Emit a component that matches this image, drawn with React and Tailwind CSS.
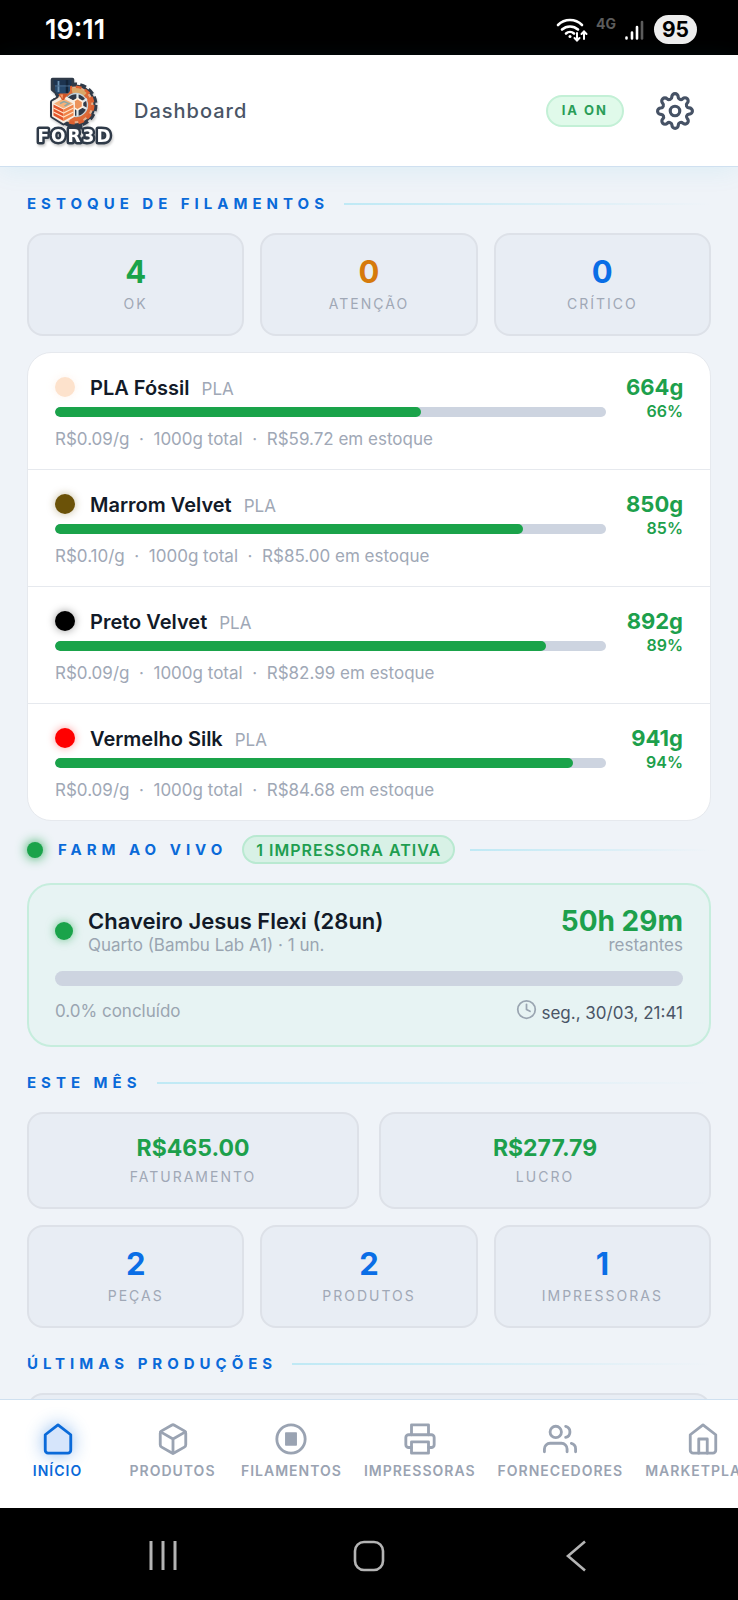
import React from 'react';

const filaments = [
    { name: 'PLA Fóssil', material: 'PLA', color: '#fde2cc', price: '0.09', total: 1000, left: 664, value: '59.72' },
    { name: 'Marrom Velvet', material: 'PLA', color: '#6b5208', price: '0.10', total: 1000, left: 850, value: '85.00' },
    { name: 'Preto Velvet', material: 'PLA', color: '#000000', price: '0.09', total: 1000, left: 892, value: '82.99' },
    { name: 'Vermelho Silk', material: 'PLA', color: '#ff0000', price: '0.09', total: 1000, left: 941, value: '84.68' },
];

const navItems = [
    { label: 'INÍCIO', icon: 'home', active: true },
    { label: 'PRODUTOS', icon: 'box' },
    { label: 'FILAMENTOS', icon: 'spool' },
    { label: 'IMPRESSORAS', icon: 'printer' },
    { label: 'FORNECEDORES', icon: 'users' },
    { label: 'MARKETPLACE', icon: 'store' },
];

const iconPaths = {
    home: <path d="M3 9l9-7 9 7v11a2 2 0 0 1-2 2H5a2 2 0 0 1-2-2z" fill="#d6e5fb" />,
    box: (
        <>
            <path d="M21 16V8a2 2 0 0 0-1-1.73l-7-4a2 2 0 0 0-2 0l-7 4A2 2 0 0 0 3 8v8a2 2 0 0 0 1 1.73l7 4a2 2 0 0 0 2 0l7-4A2 2 0 0 0 21 16z" />
            <path d="M3.27 6.96L12 12.01l8.73-5.05M12 22.08V12" />
        </>
    ),
    spool: (
        <>
            <circle cx="12" cy="12" r="10" />
            <rect x="7.8" y="7.300" width="8.400" height="9.400" rx="0.5" fill="currentColor" stroke="none" />
        </>
    ),
    printer: (
        <>
            <path d="M6 9V2h12v7" />
            <path d="M6 18H4a2 2 0 0 1-2-2v-5a2 2 0 0 1 2-2h16a2 2 0 0 1 2 2v5a2 2 0 0 1-2 2h-2" />
            <rect x="6" y="14" width="12" height="8" />
        </>
    ),
    users: (
        <>
            <path d="M17 21v-2a4 4 0 0 0-4-4H5a4 4 0 0 0-4 4v2" />
            <circle cx="9" cy="7" r="4" />
            <path d="M23 21v-2a4 4 0 0 0-3-3.87M16 3.13a4 4 0 0 1 0 7.75" />
        </>
    ),
    store: (
        <>
            <path d="M3 9l9-7 9 7v11a2 2 0 0 1-2 2H5a2 2 0 0 1-2-2z" />
            <path d="M9 22V12h6v10" />
        </>
    ),
    gear: (
        <>
            <circle cx="12" cy="12" r="3" />
            <path d="M19.4 15a1.65 1.65 0 0 0 .33 1.82l.06.06a2 2 0 0 1 0 2.83 2 2 0 0 1-2.83 0l-.06-.06a1.65 1.65 0 0 0-1.82-.33 1.65 1.65 0 0 0-1 1.51V21a2 2 0 0 1-2 2 2 2 0 0 1-2-2v-.09A1.65 1.65 0 0 0 9 19.4a1.65 1.65 0 0 0-1.82.33l-.06.06a2 2 0 0 1-2.83 0 2 2 0 0 1 0-2.83l.06-.06a1.65 1.65 0 0 0 .33-1.82 1.65 1.65 0 0 0-1.51-1H3a2 2 0 0 1-2-2 2 2 0 0 1 2-2h.09A1.65 1.65 0 0 0 4.6 9a1.65 1.65 0 0 0-.33-1.82l-.06-.06a2 2 0 0 1 0-2.83 2 2 0 0 1 2.83 0l.06.06a1.65 1.65 0 0 0 1.82.33H9a1.65 1.65 0 0 0 1-1.51V3a2 2 0 0 1 2-2 2 2 0 0 1 2 2v.09a1.65 1.65 0 0 0 1 1.51 1.65 1.65 0 0 0 1.82-.33l.06-.06a2 2 0 0 1 2.83 0 2 2 0 0 1 0 2.83l-.06.06a1.65 1.65 0 0 0-.33 1.82V9a1.65 1.65 0 0 0 1.51 1H21a2 2 0 0 1 2 2 2 2 0 0 1-2 2h-.09a1.65 1.65 0 0 0-1.51 1z" />
        </>
    ),
    clock: (
        <>
            <circle cx="12" cy="12" r="10" />
            <path d="M12 6v6l4 2" />
        </>
    ),
};

const Icon = ({ name, size, className }) => (
    <svg width={size} height={size} viewBox="0 0 24 24" fill="none" stroke="currentColor" strokeWidth="2"
        strokeLinecap="round" strokeLinejoin="round" overflow="visible" className={className} aria-hidden="true">
        {iconPaths[name]}
    </svg>
);

const Logo = () => (
    <svg width="80" height="72" viewBox="0 0 80 72" className="shrink-0 drop-shadow-[1px_2px_1px_rgb(0,0,0,0.2)]" role="img" aria-label="FOR3D">
        {/* Sticker outline */}
        <g fill="#2f3a48" stroke="#2f3a48" strokeLinejoin="round">
            <path d="M18.500 4.500h20v11l-4 8H25l-3-6-3.500-3z" strokeWidth="3.5" />
            <circle cx="41" cy="30" r="19.500" strokeWidth="2" />
            <circle cx="41" cy="30" r="20.500" fill="none" strokeDasharray="6 3.200" strokeWidth="4" />
            <path d="M29.500 21l11 6v14l-11 7-11-7V27z" strokeWidth="5" />
            <path d="M34 44h14v10H34z" strokeWidth="1" />
        </g>
        {/* Gear, light rim first and the teeth over it */}
        <circle cx="41" cy="30" r="18.500" fill="#e3b08c" />
        <circle cx="41" cy="30" r="17.500" fill="none" stroke="#dd6030" strokeWidth="4" strokeDasharray="5.500 3.700" />
        <circle cx="41" cy="30" r="14" fill="#2f3a48" stroke="#dd6a37" strokeWidth="4.500" />
        <path d="M38 15.800a14.500 14.500 0 0 1 13 4" fill="none" stroke="#dba867" strokeWidth="5" />
        <circle cx="42" cy="30" r="11.500" fill="none" stroke="#c3d3da" strokeWidth="1.300" />
        <path d="M43.500 19v22M34 24l19 10M34 36l19-12" stroke="#dfe8eb" strokeWidth="2.200" />
        <path d="M43.500 23.500l5 3v5.500l-5 3-5-3v-5.500z" fill="#ec935a" stroke="#fff0de" strokeWidth="1.500" />
        {/* Printed cube */}
        <path d="M29.500 20l11.500 6.500v15l-11.500 7-11.500-7v-15z" fill="#f7ede2" />
        <path d="M29.500 23.500l9.500 5-9.500 5-9.500-5z" fill="#f6b078" />
        <path d="M19.500 29.500l10 5v11.500l-10-5.500z" fill="#e4562b" />
        <path d="M39.500 29.500l-10 5v11.500l10-5.500z" fill="#f08449" />
        <path d="M19.500 33l10 5 10-5M19.500 37l10 5 10-5" fill="none" stroke="#ffe1c6" strokeWidth="1.200" />
        <path d="M26 28.500l4-2 5 2-4.500 2.500" fill="none" stroke="#8fa7a3" strokeWidth="1.500" />
        {/* Extruder */}
        <path d="M19.500 5h18v5h-18z" fill="#1d3450" />
        <path d="M21 10h15v6l-2 2.500h-11l-2-2.500z" fill="#27496d" />
        <path d="M24.500 6v11" stroke="#6c93b4" strokeWidth="1.800" />
        <path d="M33 5v13" stroke="#142539" strokeWidth="2.500" />
        <path d="M21 11h15" stroke="#48698a" strokeWidth="1" />
        <path d="M24.500 19h9l-3.500 6h-2z" fill="#cf5427" />
        <path d="M26 19.500h3l-.5 4.500z" fill="#f6a06c" />
        <text x="41" y="67" textAnchor="middle" fontFamily="DejaVu Sans" fontWeight="700" fontSize="17" letterSpacing="2" fill="#ffffff"
            stroke="#2f3a48" strokeWidth="5" strokeLinejoin="round" paintOrder="stroke">FOR3D</text>
    </svg>
);

const StatusBar = () => (
    <div className="h-[55px] shrink-0 bg-black text-white flex items-center justify-between pl-[45px] pr-[41px] pt-1">
        <span className="text-[27px] leading-8 font-semibold">19:11</span>
        <div className="flex items-center">
            <svg width="32" height="26" viewBox="0 0 32 26" fill="none" stroke="#ffffff" strokeWidth="2.6" strokeLinecap="round" aria-hidden="true">
                <path d="M2 8a17 17 0 0 1 24 0M6 12.500a12 12 0 0 1 16 0M10 16.500a6 6 0 0 1 8 0" />
                <circle cx="14" cy="19.500" r="1.500" fill="#ffffff" stroke="none" />
                <path d="M21 16v7M18.500 21l2.500 2.500 2.500-2.500M28 22v-7M25.500 17l2.500-2.500 2.500 2.500" strokeWidth="2" />
            </svg>
            <span className="ml-2 mb-3 text-sm leading-4 font-bold text-[#5c5c5c]">4G</span>
            <svg width="20" height="22" viewBox="0 0 20 22" strokeWidth="2.6" strokeLinecap="round" className="ml-2" aria-hidden="true">
                <path d="M2.500 18.500v1M8 13.500v6M13 8v11.500" stroke="#ffffff" />
                <path d="M18 3v16.500" stroke="#5c5c5c" />
            </svg>
            <span className="ml-2.5 w-[43px] h-[29px] rounded-full bg-[#ededed] text-black text-[21px] font-bold flex items-center justify-center">95</span>
        </div>
    </div>
);

const SectionTitle = ({ children, className = '' }) => (
    <div className={`flex items-center gap-[15px] mb-[19px] ${className}`}>
        <h2 className="text-[15px] leading-5 font-bold tracking-[5px] text-[#0a6ad9]">{children}</h2>
        <div className="h-0.5 flex-1 bg-gradient-to-r from-[#bfe9f5] to-transparent" />
    </div>
);

const StatCard = ({ value, label, color }) => (
    <div className="bg-[#e8edf4] border-2 border-[#dde1e8] rounded-2xl pt-[21px] pb-5 text-center">
        <p className={`text-[31px] leading-8 font-bold ${color}`}>{value}</p>
        <p className="mt-1.5 text-sm leading-5 tracking-[2px] text-[#a0a8b6]">{label}</p>
    </div>
);

const MoneyCard = ({ value, label }) => (
    <div className="bg-[#e8edf4] border-2 border-[#dde1e8] rounded-2xl py-5 text-center">
        <p className="text-[23px] leading-7 font-bold text-[#1da04c]">{value}</p>
        <p className="mt-[5px] text-sm leading-5 tracking-[2px] text-[#a0a8b6]">{label}</p>
    </div>
);

const FilamentRow = ({ item }) => {
    const percent = (item.left / item.total) * 100;
    return (
        <li className="flex gap-5 px-[27px] pt-5 pb-[18px]">
            <div className="flex-1 min-w-0">
                <div className="flex items-center">
                    <span className="w-5 h-5 rounded-full" style={{ backgroundColor: item.color, boxShadow: `0 0 8px ${item.color}66` }} />
                    <div className="flex items-baseline gap-3 ml-[15px] pt-[3px]">
                        <h3 className="text-xl leading-6 font-semibold text-[#121a28]">{item.name}</h3>
                        <span className="text-[17px] leading-6 text-[#a0a8b6]">{item.material}</span>
                    </div>
                </div>
                <div className="mt-1.5 h-2.5 rounded-full bg-[#cdd4e0] overflow-hidden">
                    <div className="h-full rounded-full bg-[#1aa34a]" style={{ width: `${percent}%` }} />
                </div>
                <p className="mt-2.5 text-[17px] leading-6 text-[#a0a8b6]">
                    R${item.price}/g &nbsp;·&nbsp; {item.total}g total &nbsp;·&nbsp; R${item.value} em estoque
                </p>
            </div>
            <div className="w-[57px] shrink-0 text-right font-bold text-[#1da04c]">
                <p className="text-[22px] leading-7">{item.left}g</p>
                <p className="text-base leading-5 font-semibold">{Math.round(percent)}%</p>
            </div>
        </li>
    );
};

export default function App() {
    return (
        <div className="h-screen flex flex-col bg-[#eff3f8] font-['Inter',sans-serif] overflow-hidden">
            <StatusBar />

            {/* Header */}
            <header className="relative h-28 shrink-0 flex items-center bg-white border-b border-[#cfe0f0] pl-[34px] pr-11 shadow-[0_4px_24px_rgb(6,182,212,0.08)]">
                <Logo />
                <h1 className="ml-5 text-xl font-medium tracking-[1px] text-[#4a5566]">Dashboard</h1>
                <span className="ml-auto h-8 px-3.5 flex items-center rounded-full border-2 border-[#c3f0d6] bg-[#e0faea] text-[13px] font-bold tracking-[2px] text-[#2a9d58]">IA ON</span>
                <button type="button" aria-label="Configurações" className="ml-8 text-[#465265]">
                    <Icon name="gear" size={38} />
                </button>
            </header>

            <main className="flex-1 min-h-0 overflow-hidden px-[27px] pt-[27px]">
                <SectionTitle>ESTOQUE DE FILAMENTOS</SectionTitle>
                <div className="grid grid-cols-3 gap-4">
                    <StatCard value="4" label="OK" color="text-[#1aa34a]" />
                    <StatCard value="0" label="ATENÇÃO" color="text-[#d67a0c]" />
                    <StatCard value="0" label="CRÍTICO" color="text-[#0a6ee6]" />
                </div>

                <ul className="mt-4 bg-white border border-[#e6e9ee] rounded-3xl divide-y divide-[#e6e9ee]">
                    {filaments.map(item => <FilamentRow key={item.name} item={item} />)}
                </ul>

                {/* Live farm */}
                <div className="mt-3.5 mb-[19px] flex items-center">
                    <span className="w-4 h-4 rounded-full bg-[#1aa34a] shadow-[0_0_12px_#1aa34a]" />
                    <h2 className="ml-[15px] text-[15px] leading-5 font-bold tracking-[5px] text-[#0a6ad9]">FARM AO VIVO</h2>
                    <span className="ml-[15px] h-[29px] px-3 flex items-center rounded-full border-2 border-[#b9e9d1] bg-[#d8f1e6] text-base font-semibold tracking-[1px] text-[#1f9e50]">1 IMPRESSORA ATIVA</span>
                    <div className="ml-[15px] h-0.5 flex-1 bg-gradient-to-r from-[#bfe9f5] to-transparent" />
                </div>
                <section className="bg-[#e7f3f3] border-2 border-[#c6eddd] rounded-3xl px-[26px] py-[22px]">
                    <div className="flex items-center">
                        <span className="w-[18px] h-[18px] rounded-full bg-[#1aa34a] shadow-[0_0_10px_rgb(26,163,74,0.6)]" />
                        <div className="ml-[15px]">
                            <h3 className="text-[22px] leading-7 font-semibold text-[#121a28]">Chaveiro Jesus Flexi (28un)</h3>
                            <p className="text-[17px] leading-5 text-[#9aa5b1]">Quarto (Bambu Lab A1) · 1 un.</p>
                        </div>
                        <div className="ml-auto text-right">
                            <p className="text-[28px] leading-7 font-bold text-[#1da04c]">50h 29m</p>
                            <p className="text-[17px] leading-5 text-[#9aa5b1]">restantes</p>
                        </div>
                    </div>
                    <div className="mt-4 h-[15px] rounded-full bg-[#cdd4e0]" />
                    <div className="mt-[13px] flex justify-between text-[17px] leading-6">
                        <span className="text-[#9aa5b1]">0.0% concluído</span>
                        <span className="flex text-[#4a5566]">
                            <Icon name="clock" size={21} className="mr-1 text-[#9aa5b1]" />
                            <span className="pt-0.5 -mb-0.5">seg., 30/03, 21:41</span>
                        </span>
                    </div>
                </section>

                <SectionTitle className="mt-[26px]">ESTE MÊS</SectionTitle>
                <div className="grid grid-cols-2 gap-5">
                    <MoneyCard value="R$465.00" label="FATURAMENTO" />
                    <MoneyCard value="R$277.79" label="LUCRO" />
                </div>
                <div className="mt-4 grid grid-cols-3 gap-4">
                    <StatCard value="2" label="PEÇAS" color="text-[#0a6ee6]" />
                    <StatCard value="2" label="PRODUTOS" color="text-[#0a6ee6]" />
                    <StatCard value="1" label="IMPRESSORAS" color="text-[#0a6ee6]" />
                </div>

                <SectionTitle className="mt-[26px]">ÚLTIMAS PRODUÇÕES</SectionTitle>
                <div className="h-28 bg-[#e8edf4] border-2 border-[#dde1e8] rounded-2xl" />
            </main>

            {/* Bottom navigation, scrolls sideways */}
            <nav className="relative shrink-0 flex bg-white border-t border-[#cfe0f0] pt-[22px] pb-[27px] overflow-x-auto overflow-y-hidden [scrollbar-width:none]">
                {navItems.map(item => (
                    <a key={item.label} href="#" className={`shrink-0 min-w-[115px] px-[11px] flex flex-col items-center gap-[5px] ${item.active ? 'text-[#0a6ad9]' : 'text-[#9aa3b2]'}`}>
                        <Icon name={item.icon} size={34} className={item.active ? 'drop-shadow-[0_0_9px_rgb(10,106,217,0.45)]' : ''} />
                        <span className="text-sm leading-5 font-semibold tracking-[1px]">{item.label}</span>
                    </a>
                ))}
            </nav>

            {/* System buttons */}
            <div className="h-[92px] shrink-0 bg-black px-15 pt-1 grid grid-cols-3 place-items-center">
                <button type="button" aria-label="Recentes">
                    <svg width="32" height="32" viewBox="0 0 32 32" stroke="#b4b4b4" strokeWidth="3"><path d="M4 1v29M16 1v29M28 1v29" /></svg>
                </button>
                <button type="button" aria-label="Início">
                    <svg width="32" height="32" viewBox="0 0 32 32" fill="none" stroke="#b4b4b4" strokeWidth="2.6"><rect x="2" y="2" width="28" height="28" rx="9" /></svg>
                </button>
                <button type="button" aria-label="Voltar">
                    <svg width="32" height="32" viewBox="0 0 32 32" fill="none" stroke="#b4b4b4" strokeWidth="2.6"><path d="M26 1.500L9 16l17 14.500" /></svg>
                </button>
            </div>
        </div>
    );
}
